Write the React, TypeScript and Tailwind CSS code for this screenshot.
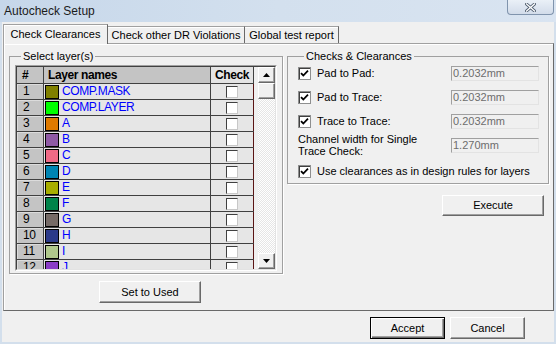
import type { ReactNode } from "react";

const LAYERS = [
  { n: 1, name: "COMP.MASK", color: "#808000" },
  { n: 2, name: "COMP.LAYER", color: "#00ff00" },
  { n: 3, name: "A", color: "#df7a00" },
  { n: 4, name: "B", color: "#8f5aa5" },
  { n: 5, name: "C", color: "#f06a86" },
  { n: 6, name: "D", color: "#0085b3" },
  { n: 7, name: "E", color: "#a8ae00" },
  { n: 8, name: "F", color: "#00834a" },
  { n: 9, name: "G", color: "#766b67" },
  { n: 10, name: "H", color: "#2b3a8a" },
  { n: 11, name: "I", color: "#b0c88c" },
  { n: 12, name: "J", color: "#8a3cc6" },
];

const CLEARANCES = [
  { label: "Pad to Pad:", value: "0.2032mm" },
  { label: "Pad to Trace:", value: "0.2032mm" },
  { label: "Trace to Trace:", value: "0.2032mm" },
];

export default function App() {
  return (
    <div className="flex h-[344px] w-[556px] flex-col bg-[#d3dfec] font-['Liberation_Sans',Arial,sans-serif] text-[11px] text-black">
      {/* Title bar */}
      <div className="flex h-[22px] shrink-0 items-start justify-between bg-gradient-to-r from-[#c6d7ea] via-[#d3e0ee] to-[#d9e4f1]">
        <span className="pl-[4px] pt-[3px] text-[12px] leading-[16px] text-[#1b1b1b]">
          Autocheck Setup
        </span>
        <CloseButton />
      </div>

      {/* Client area */}
      <div className="mx-[2px] mb-[2px] flex flex-1 flex-col bg-[#f0f0f0] pt-[2px]">
        {/* Tabs */}
        <div className="flex h-[19px] items-start pl-[1px]">
          <div className="relative z-10 flex h-[20px] w-[105px] items-center justify-center border-l border-t border-r border-l-[#a0a0a0] border-t-[#a0a0a0] border-r-[#696969] bg-[#f0f0f0] pb-[1px] leading-[13px] shadow-[inset_1px_1px_0_#fff]">
            Check Clearances
          </div>
          <div className="mt-[2px] flex h-[17px] w-[137px] items-center justify-center border-t border-r border-t-[#a0a0a0] border-r-[#696969] leading-[13px] shadow-[inset_0_1px_0_#fff]">
            Check other DR Violations
          </div>
          <div className="mt-[2px] flex h-[17px] w-[94px] items-center justify-center border-t border-r border-t-[#a0a0a0] border-r-[#696969] leading-[13px] shadow-[inset_0_1px_0_#fff]">
            Global test report
          </div>
        </div>

        {/* Tab panel */}
        <div className="ml-[1px] flex h-[268px] shrink-0 items-start border border-[#a0a0a0] border-r-[#696969] border-b-[#696969] pl-[5px] pt-[6px] shadow-[inset_1px_1px_0_#fff]">
          {/* Left column */}
          <div className="flex w-[274px] flex-col items-start">
            <fieldset className="h-[224px] w-[274px] border border-[#a0a0a0] px-[5px] pb-[2px] shadow-[1px_1px_0_#fff]">
              <legend className="ml-[6px] px-[2px] leading-[13px]">Select layer(s)</legend>
              <LayerTable />
            </fieldset>
            <Button className="ml-[90px] mt-[7px] h-[22px] w-[102px]">Set to Used</Button>
          </div>

          {/* Right column */}
          <div className="ml-[4px] flex w-[262px] flex-col items-start">
            <fieldset className="h-[134px] w-[262px] border border-[#a0a0a0] pl-[10px] pr-[9px] shadow-[1px_1px_0_#fff]">
              <legend className="ml-[6px] px-[2px] leading-[13px]">Checks &amp; Clearances</legend>
              <div className="flex flex-col">
                {CLEARANCES.map((c, i) => (
                  <div
                    key={c.label}
                    className={`flex h-[16px] items-center ${i === 0 ? "mt-[2px]" : "mt-[8px]"}`}
                  >
                    <CheckBox />
                    <span className="ml-[6px] leading-[13px]">{c.label}</span>
                    <Field value={c.value} />
                  </div>
                ))}
                <div className="mt-[4px] flex h-[24px] items-center">
                  <span className="leading-[12px]">
                    Channel width for Single
                    <br />
                    Trace Check:
                  </span>
                  <Field value="1.270mm" />
                </div>
                <div className="mt-[7px] flex h-[14px] items-center">
                  <CheckBox />
                  <span className="ml-[6px] leading-[13px]">
                    Use clearances as in design rules for layers
                  </span>
                </div>
              </div>
            </fieldset>
            <Button className="ml-[155px] mt-[11px] h-[21px] w-[102px]">Execute</Button>
          </div>
        </div>

        {/* Dialog buttons */}
        <div className="flex flex-1 items-start justify-end gap-[5px] pr-[29px] pt-[6px]">
          <Button isDefault className="h-[22px] w-[75px]">
            Accept
          </Button>
          <Button className="h-[22px] w-[75px]">Cancel</Button>
        </div>
      </div>
    </div>
  );
}

function LayerTable() {
  return (
    <div className="mt-[2px] h-[206px] w-[262px] border border-[#a0a0a0] border-r-white border-b-white">
      <div className="flex h-full w-full border border-[#404040] border-r-[#e3e3e3] border-b-[#e3e3e3] bg-[#f0f0f0]">
        {/* Grid */}
        <div className="w-[237px] overflow-hidden text-[12px] tracking-[-0.4px]">
          <div className="flex h-[17px] border-b border-[#404040] font-bold">
            <div className="w-[27px] border-r border-[#404040] bg-[#c4c4c4] pl-[5px] leading-[16px]">#</div>
            <div className="w-[167px] border-r border-[#404040] bg-[#c4c4c4] pl-[4px] leading-[16px]">
              Layer names
            </div>
            <div className="w-[43px] border-r border-[#404040] bg-[#e4e4e4] text-center leading-[16px]">
              Check
            </div>
          </div>
          {LAYERS.map((l) => (
            <div key={l.n} className="flex h-[16px] shrink-0 border-b border-[#404040]">
              <div className="w-[27px] border-r border-[#404040] bg-[#c4c4c4] pl-[6px] leading-[15px] shadow-[inset_1px_1px_0_#dcdcdc]">
                {l.n}
              </div>
              <div className="flex w-[167px] items-center border-r border-[#404040] bg-[#e6e6e6]">
                <span
                  className="ml-[1px] h-[14px] w-[14px] border border-black"
                  style={{ background: l.color }}
                />
                <span className="ml-[3px] leading-[15px] text-[#0000ff]">{l.name}</span>
              </div>
              <div className="flex w-[43px] items-center justify-center border-r border-[#5a1414] bg-[#e6e6e6]">
                <span className="h-[12px] w-[12px] border border-[#404040] border-r-[#c8c8c8] border-b-[#c8c8c8] bg-white" />
              </div>
            </div>
          ))}
        </div>

        {/* Scrollbar */}
        <div className="ml-[4px] flex w-[17px] flex-col">
          <ScrollButton dir="up" />
          <div className="h-[16px] border border-white border-r-[#696969] border-b-[#696969] bg-[#f0f0f0] shadow-[inset_-1px_-1px_0_#a0a0a0]" />
          <div className="flex-1 bg-[repeating-conic-gradient(#ffffff_0%_25%,#e6e6e6_0%_50%)] bg-[length:2px_2px]" />
          <ScrollButton dir="down" />
        </div>
      </div>
    </div>
  );
}

function ScrollButton({ dir }: { dir: "up" | "down" }) {
  return (
    <div className="flex h-[16px] items-center justify-center border border-white border-r-[#696969] border-b-[#696969] bg-[#f0f0f0] shadow-[inset_-1px_-1px_0_#a0a0a0]">
      <svg width="7" height="4" viewBox="0 0 7 4" aria-hidden>
        {dir === "up" ? (
          <path d="M3.5 0L7 4H0z" fill="#000" />
        ) : (
          <path d="M0 0h7L3.5 4z" fill="#000" />
        )}
      </svg>
    </div>
  );
}

function CheckBox() {
  return (
    <span className="flex h-[13px] w-[13px] shrink-0 items-center justify-center border border-[#8e8f8f] bg-white shadow-[inset_1px_1px_0_#404040]">
      <svg width="9" height="9" viewBox="0 0 9 9" aria-hidden>
        <path d="M1 4.2l2.3 2.3L8 1.6" fill="none" stroke="#000" strokeWidth="1.8" />
      </svg>
    </span>
  );
}

function Field({ value }: { value: string }) {
  return (
    <div className="ml-auto flex h-[15px] w-[88px] items-center border border-[#a0a0a0] border-r-[#e3e3e3] border-b-[#e3e3e3] bg-[#f0f0f0] pl-[1px] leading-[13px] text-[#6d6d6d]">
      {value}
    </div>
  );
}

function Button({
  children,
  className,
  isDefault,
}: {
  children: ReactNode;
  className?: string;
  isDefault?: boolean;
}) {
  const frame = isDefault
    ? "border-black shadow-[inset_1px_1px_0_#fff,inset_-1px_-1px_0_#696969,inset_-2px_-2px_0_#a0a0a0]"
    : "border-white border-r-[#696969] border-b-[#696969] shadow-[inset_-1px_-1px_0_#a0a0a0]";
  return (
    <div
      className={`flex shrink-0 items-center justify-center border bg-[#f0f0f0] leading-[13px] ${frame} ${className ?? ""}`}
    >
      {children}
    </div>
  );
}

function CloseButton() {
  return (
    <div className="mr-[2px] flex h-[15px] w-[47px] items-center justify-center rounded-b-[4px] border border-t-0 border-[#8094ad] bg-gradient-to-b from-[#eaf0f7] to-[#d2dcea]">
      <svg width="11" height="9" viewBox="0 0 11 9" aria-hidden>
        <path d="M1.5 1l8 7M9.5 1l-8 7" stroke="#4f5d6f" strokeWidth="3" strokeLinecap="square" />
        <path d="M1.5 1l8 7M9.5 1l-8 7" stroke="#ffffff" strokeWidth="1.3" strokeLinecap="square" />
      </svg>
    </div>
  );
}
